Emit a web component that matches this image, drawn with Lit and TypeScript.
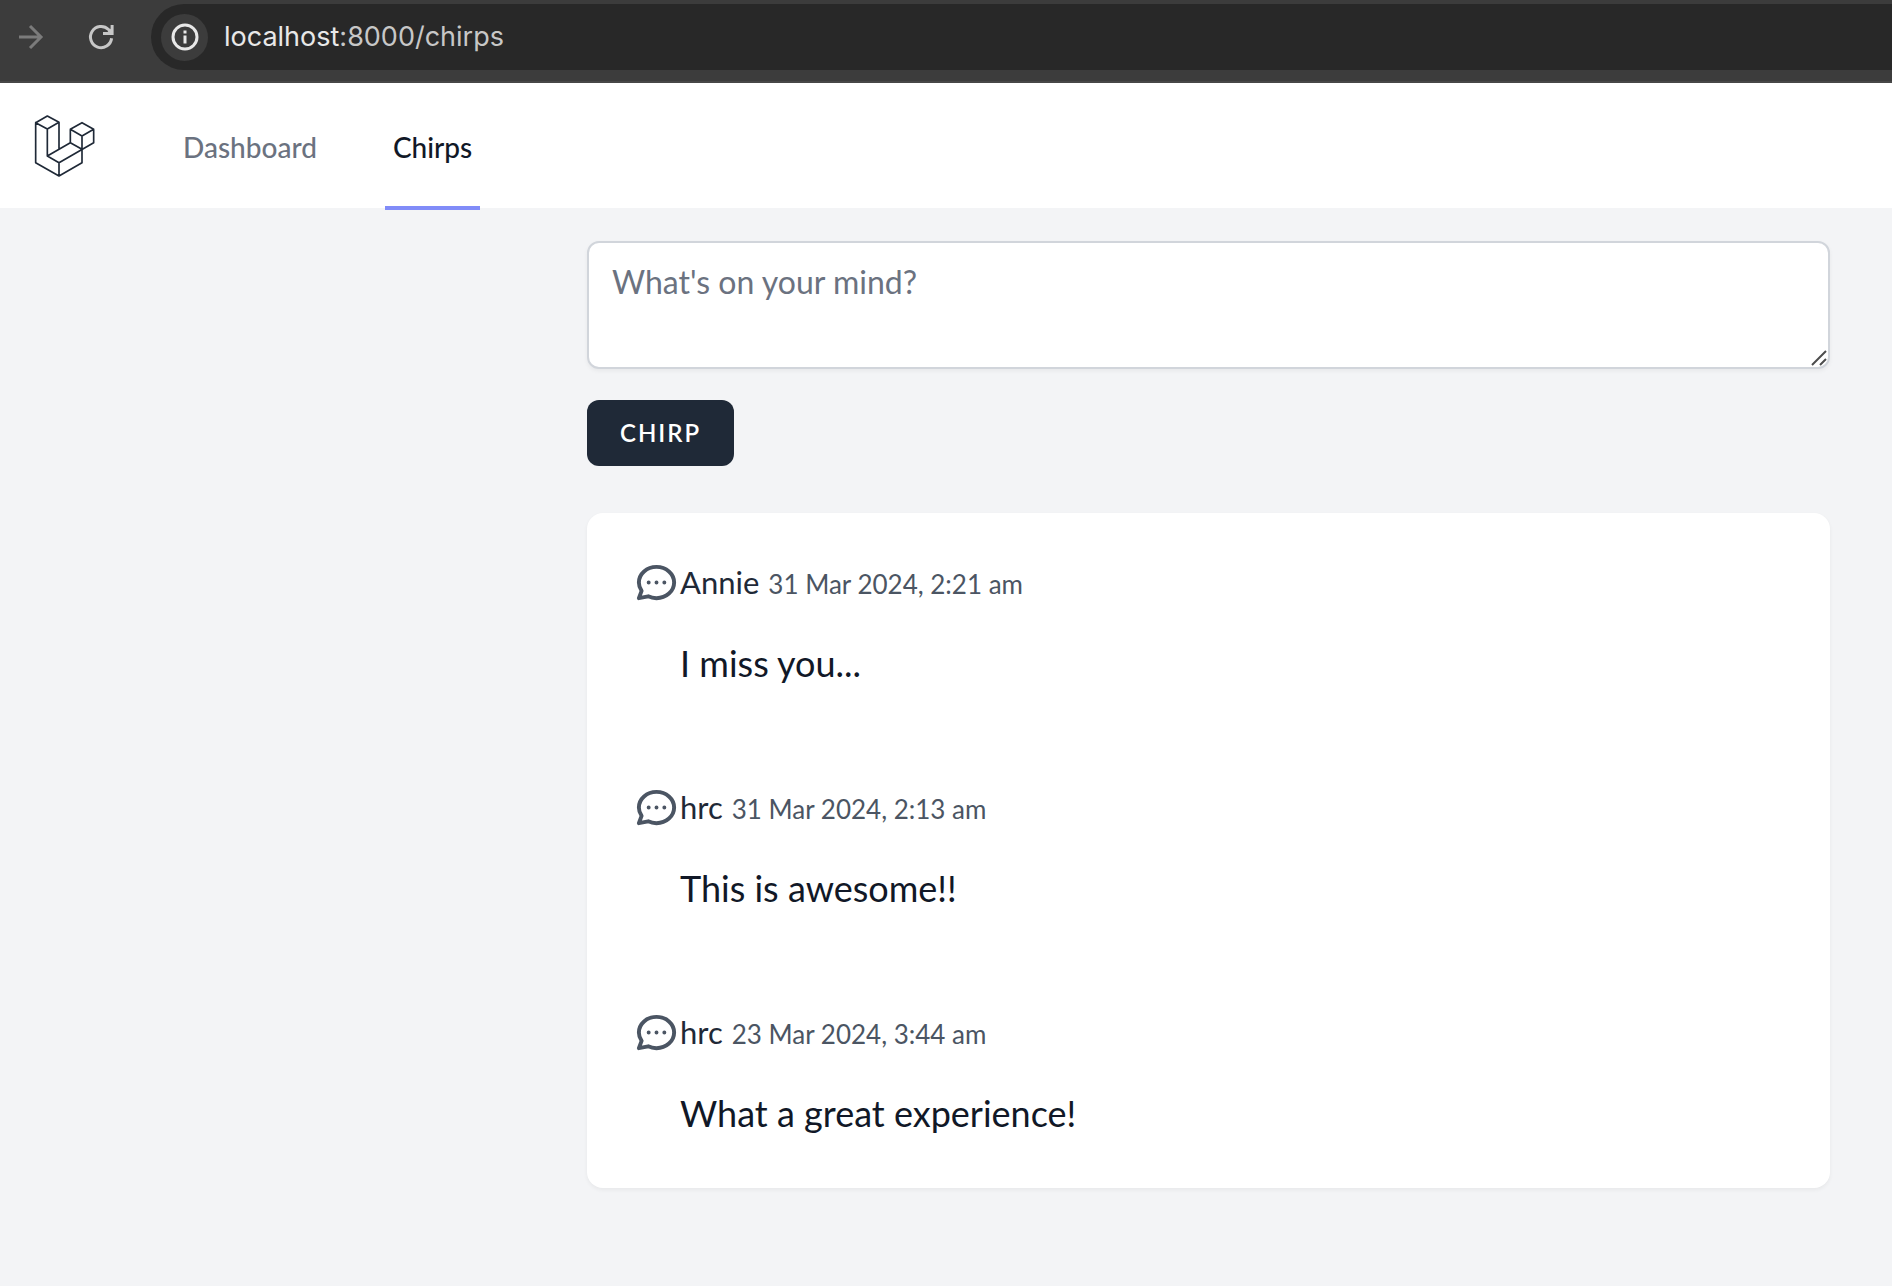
import { LitElement, html, css, svg } from "lit";
import { customElement, property } from "lit/decorators.js";

interface Chirp {
  author: string;
  date: string;
  message: string;
}

const chirps: Chirp[] = [
  { author: "Annie", date: "31 Mar 2024, 2:21 am", message: "I miss you..." },
  { author: "hrc", date: "31 Mar 2024, 2:13 am", message: "This is awesome!!" },
  { author: "hrc", date: "23 Mar 2024, 3:44 am", message: "What a great experience!" },
];

/* Dark browser toolbar with forward, reload and the address field. */
@customElement("browser-bar")
export class BrowserBar extends LitElement {
  static styles = css`
    :host {
      display: block;
      background: #3c3c3c;
    }
    .bar {
      display: flex;
      align-items: center;
      padding: 4px 0 11px 16px;
      border-bottom: 2px solid #474747;
    }
    .tool {
      display: flex;
      padding: 0;
      border: 0;
      background: none;
      color: #c7c7c7;
    }
    .tool:disabled {
      color: #7b7b7b;
    }
    .reload {
      margin: 0 36px 0 43px;
    }
    .address {
      flex: 1;
      display: flex;
      align-items: center;
      gap: 16px;
      height: 66px;
      box-sizing: border-box;
      padding-left: 10px;
      border-radius: 33px 0 0 33px;
      background: #282828;
    }
    .info {
      display: flex;
      align-items: center;
      justify-content: center;
      width: 47px;
      height: 47px;
      padding: 0;
      border: 0;
      border-radius: 50%;
      background: #3c3c3c;
      color: #e8e8e8;
    }
    .url {
      font: 400 27px/32px Inter, sans-serif;
      color: #c7c7c7;
    }
    .host {
      color: #e8e8e8;
    }
  `;

  render() {
    return html`
      <div class="bar">
        <button class="tool" disabled aria-label="Forward">
          <svg width="28" height="28" viewBox="0 0 28 28" fill="none" stroke="currentColor" stroke-width="3">
            <path d="M3 14H25M14 3L25 14L14 25" />
          </svg>
        </button>
        <button class="tool reload" aria-label="Reload">
          <svg width="28" height="28" viewBox="0 0 28 28" fill="none" stroke="currentColor" stroke-width="3">
            <path d="M24.6 15.3A10.6 10.6 0 1 1 21.5 6.5L24.5 9.5" />
            <path d="M25.1 2V10.6H16" />
            <path d="M19 10.5L25 4.5V10.5Z" fill="currentColor" stroke="none" />
          </svg>
        </button>
        <div class="address">
          <button class="info" aria-label="Site information">
            <svg width="28" height="28" viewBox="0 0 28 28" fill="none" stroke="currentColor" stroke-width="3">
              <circle cx="14" cy="14" r="12" />
              <path d="M14 12.5V20.5M14 7.5V10.5" />
            </svg>
          </button>
          <span class="url"><span class="host">localhost</span>:8000/chirps</span>
        </div>
      </div>
    `;
  }
}

/* One chirp: bubble icon, author, date and the message below. */
@customElement("chirp-item")
export class ChirpItem extends LitElement {
  @property({ attribute: false }) chirp!: Chirp;

  static styles = css`
    :host {
      display: block;
    }
    .item {
      display: grid;
      grid-template-columns: 47px 1fr;
      row-gap: 28px;
      padding: 46px 46px 48px;
    }
    .icon {
      display: block;
      width: 47px;
      height: 47px;
      color: #4b5563;
    }
    .meta {
      display: flex;
      align-items: baseline;
      gap: 9px;
      line-height: 47px;
    }
    .author {
      font-size: 31px;
      color: #1f2937;
    }
    .date {
      font-size: 26px;
      color: #4b5563;
    }
    .message {
      grid-column: 2;
      margin: 0;
      font-size: 36px;
      line-height: 54px;
      color: #111827;
    }
  `;

  render() {
    const { author, date, message } = this.chirp;
    return html`
      <article class="item">
        <svg class="icon" viewBox="0 0 24 24" fill="none" stroke="currentColor" stroke-width="2" aria-hidden="true">
          <path
            stroke-linecap="round"
            stroke-linejoin="round"
            d="M8 12h.01M12 12h.01M16 12h.01M21 12c0 4.418-4.03 8-9 8a9.863 9.863 0 01-4.255-.949L3 20l1.395-3.72C3.512 15.042 3 13.574 3 12c0-4.418 4.03-8 9-8s9 3.582 9 8z"
          />
        </svg>
        <div class="meta">
          <span class="author">${author}</span>
          <time class="date">${date}</time>
        </div>
        <p class="message">${message}</p>
      </article>
    `;
  }
}

const logo = svg`
  <path d="M48 67L83 47L118 66L83 86ZM48 67V187L118 227L187 187V107M83 86V167L118 187V227M118 66V147M83 167L152 127M118 187L222 127V87L187 67L152 87V127L187 147M152 87L187 107L222 87" />
`;

@customElement("app-root")
export class AppRoot extends LitElement {
  static styles = css`
    :host {
      display: block;
      min-height: 100vh;
      background: #f3f4f6;
      font-family: Lato, sans-serif;
    }
    .nav {
      display: flex;
      height: 125px;
      padding-left: 34px;
      background: #ffffff;
    }
    .logo {
      display: flex;
      align-self: flex-start;
      margin: 31px 79px 0 0;
    }
    .links {
      display: flex;
      gap: 60px;
    }
    .link {
      box-sizing: border-box;
      height: 127px;
      padding: 0 8px;
      border-bottom: 4px solid transparent;
      font-size: 28px;
      font-weight: 500;
      line-height: 128px;
      text-decoration: none;
      color: #6b7280;
    }
    .active {
      border-color: #818cf8;
      color: #111827;
    }
    .main {
      padding: 33px 62px;
    }
    .column {
      max-width: 1243px;
      margin-left: auto;
    }
    .field {
      position: relative;
      display: flex;
    }
    .input {
      flex: 1;
      box-sizing: border-box;
      height: 128px;
      padding: 15px 23px;
      border: 2px solid #d1d5db;
      border-radius: 12px;
      background: #ffffff;
      box-shadow: 0 2px 4px rgba(0, 0, 0, 0.05);
      font: 400 32px/47px Lato, sans-serif;
      color: #111827;
      resize: vertical;
    }
    .input::placeholder {
      color: #6b7280;
      opacity: 1;
    }
    .input::-webkit-resizer {
      background: transparent;
    }
    .grip {
      position: absolute;
      right: 3px;
      bottom: 3px;
      pointer-events: none;
    }
    .submit {
      display: block;
      height: 66px;
      margin: 31px 0 47px;
      padding: 0 33px 2px;
      border: 0;
      border-radius: 12px;
      background: #1f2937;
      font: 600 24px/31px Lato, sans-serif;
      letter-spacing: 2px;
      color: #ffffff;
    }
    .card {
      border-radius: 16px;
      background: #ffffff;
      box-shadow: 0 2px 4px rgba(0, 0, 0, 0.05);
    }
  `;

  render() {
    return html`
      <browser-bar></browser-bar>
      <nav class="nav">
        <a class="logo" href="#" aria-label="Home">
          <svg width="62" height="64" viewBox="43 41 186 192" fill="none" stroke="#1f2937" stroke-width="5" stroke-linejoin="round" stroke-linecap="round">
            ${logo}
          </svg>
        </a>
        <div class="links">
          <a class="link" href="#dashboard">Dashboard</a>
          <a class="link active" href="#chirps" aria-current="page">Chirps</a>
        </div>
      </nav>
      <main class="main">
        <div class="column">
          <form @submit=${(e: Event) => e.preventDefault()}>
            <div class="field">
              <textarea class="input" name="message" aria-label="What's on your mind?" placeholder="What's on your mind?"></textarea>
              <svg class="grip" width="16" height="16" viewBox="0 0 16 16" fill="none" stroke="#4d4d4d" stroke-width="2" aria-hidden="true">
                <path d="M1 15L15 1M9 15L15 9" />
              </svg>
            </div>
            <button class="submit" type="submit">CHIRP</button>
          </form>
          <section class="card">
            ${chirps.map((chirp) => html`<chirp-item .chirp=${chirp}></chirp-item>`)}
          </section>
        </div>
      </main>
    `;
  }
}
